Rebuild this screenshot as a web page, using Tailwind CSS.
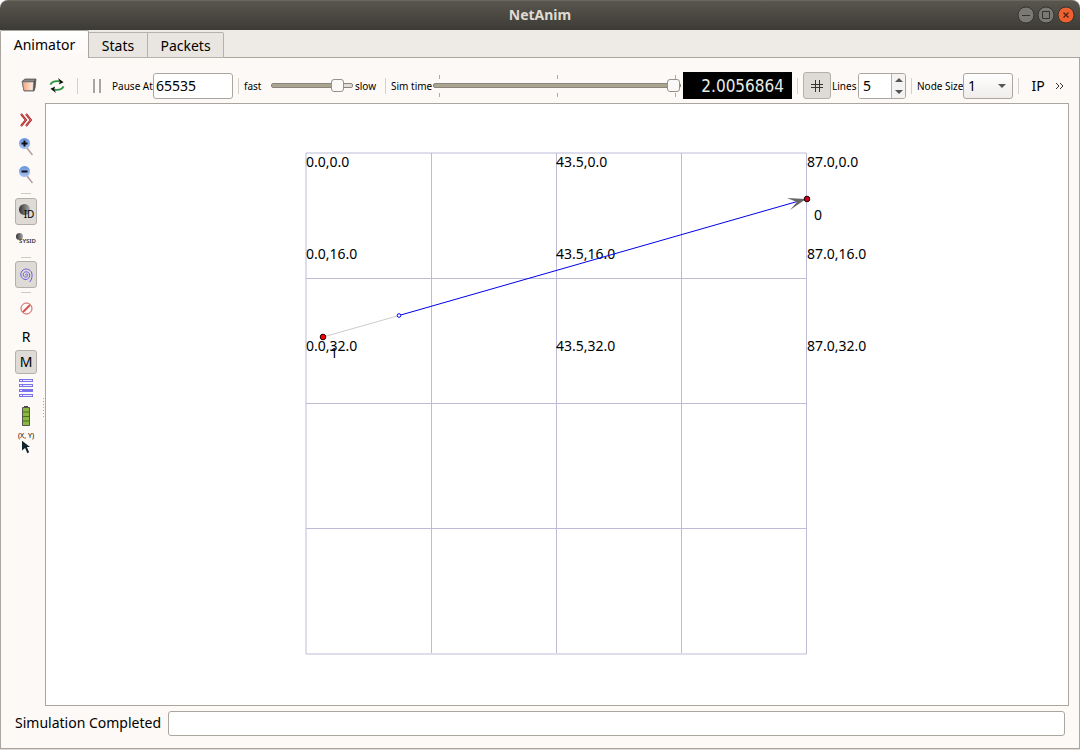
<!DOCTYPE html>
<html lang="en">
<head>
<meta charset="utf-8">
<meta name="viewport" content="width=device-width, initial-scale=1">
<title>NetAnim</title>
<script src="https://cdn.jsdelivr.net/npm/@tailwindcss/browser@4"></script>
</head>
<body class="flex h-screen flex-col overflow-hidden bg-white font-['Noto_Sans',sans-serif] text-[14px] leading-5 text-black">

<!-- Title bar -->
<header class="relative flex h-[30px] shrink-0 items-center justify-center rounded-t-lg border-t border-[#69675f] bg-linear-to-b from-[#59564e] to-[#3d3b36]">
  <h1 class="pb-px text-[14px] font-bold text-[#dfdbd2]">NetAnim</h1>
  <div class="absolute right-[5px] flex gap-[2px] pb-px">
    <button aria-label="Minimize" class="size-[18px]"><svg viewBox="0 0 18 18"><circle cx="9" cy="9" r="8" fill="#7b7a72" stroke="#34332f"/><path d="M5 9.500h8" stroke="#34332f"/></svg></button>
    <button aria-label="Maximize" class="size-[18px]"><svg viewBox="0 0 18 18"><circle cx="9" cy="9" r="8" fill="#7b7a72" stroke="#34332f"/><path d="M5.500 5.500h7v7h-7z" fill="none" stroke="#34332f"/></svg></button>
    <button aria-label="Close" class="size-[18px]"><svg viewBox="0 0 18 18"><circle cx="9" cy="9" r="8" fill="#ee6030" stroke="#34332f"/><path d="M6.500 6.500l5 5M11.500 6.500l-5 5" stroke="#4a2415" stroke-width="1.300"/></svg></button>
  </div>
</header>

<!-- Tabs -->
<nav role="tablist" class="flex h-7 shrink-0 items-end bg-[#eeebe7] shadow-[inset_0_-1px_0_#aaa69f]">
  <button role="tab" aria-selected="true" class="h-7 w-[89px] rounded-t-xs border border-b-0 border-[#aaa69f] bg-linear-to-b from-white to-[#fdf9f6]">Animator</button>
  <button role="tab" aria-selected="false" class="h-[26px] w-[59px] border border-l-0 border-[#b5b2ad] bg-[#e9e6e2] pt-px">Stats</button>
  <button role="tab" aria-selected="false" class="h-[26px] w-[76px] rounded-tr-xs border border-l-0 border-[#b5b2ad] bg-[#e9e6e2] pt-px">Packets</button>
</nav>

<main class="flex min-h-0 flex-1 flex-col border-x border-b border-[#aaa69f] bg-[#fdf9f6]">

  <!-- Playback toolbar -->
  <div role="toolbar" aria-label="Playback" class="flex h-[45px] shrink-0 items-center pt-[10px] pr-3 pl-5 text-[10px] whitespace-nowrap">
    <button aria-label="Open trace" class="mr-3 h-4 w-4 shrink-0"><svg class="h-4 w-4 pb-[2px]" viewBox="0 0 16 14" preserveAspectRatio="none"><defs><linearGradient id="box"><stop offset="0" stop-color="#f3a27b"/><stop offset="1" stop-color="#fff0e6"/></linearGradient></defs><path d="M1 3.500L4 1h11l-1 9-1 3H3z" fill="#555" stroke="#555" stroke-width=".8"/><path d="M1.500 4h11l-.5 8.500H3z" fill="url(#box)" stroke="#777" stroke-width=".6"/><path d="M4 1.500h10L12.500 3.500H2z" fill="#888"/></svg></button>
    <button aria-label="Reload" class="mr-3 h-4 w-4 shrink-0"><svg class="h-4 w-4 pb-px" viewBox="0 0 16 16" fill="none"><path d="M1 7Q3 2.500 11 3.500M15 9Q13 13.500 5 12.500" stroke="#2f9440" stroke-width="2"/><path d="M9 0l6 4.500L10 7l1-3zM7 16l-6-4.500L6 9l-1 3z" fill="#111"/></svg></button>
    <span class="h-4 w-px shrink-0 bg-[#d5d0cb]"></span>
    <button aria-label="Pause" class="mr-[11px] ml-[15px] h-4 w-2 shrink-0"><svg viewBox="0 0 8 16"><path d="M1 1v14M7 1v14" stroke="#8c8a87" stroke-width="1.500"/></svg></button>
    <label for="pause" class="w-[41px] shrink-0">Pause At</label>
    <input id="pause" value="65535" class="h-[26px] w-20 shrink-0 rounded-[3px] border border-[#aaa69f] bg-white px-[2px] text-[14px]">
    <span class="mx-[5px] h-4 w-px shrink-0 bg-[#d5d0cb]"></span>
    <label for="speed" class="w-[27px] shrink-0">fast</label>
    <input id="speed" type="range" min="0" max="100" value="88" class="h-4 w-[82px] shrink-0 appearance-none bg-transparent [&::-webkit-slider-runnable-track]:h-[5px] [&::-webkit-slider-runnable-track]:rounded-xs [&::-webkit-slider-runnable-track]:border [&::-webkit-slider-runnable-track]:border-[#88857b] [&::-webkit-slider-runnable-track]:bg-linear-to-r [&::-webkit-slider-runnable-track]:from-[#aaa490] [&::-webkit-slider-runnable-track]:from-80% [&::-webkit-slider-runnable-track]:to-[#dfdcd8] [&::-webkit-slider-runnable-track]:to-80% [&::-webkit-slider-thumb]:-mt-[5px] [&::-webkit-slider-thumb]:size-[13px] [&::-webkit-slider-thumb]:appearance-none [&::-webkit-slider-thumb]:rounded-[3px] [&::-webkit-slider-thumb]:border [&::-webkit-slider-thumb]:border-[#95928e] [&::-webkit-slider-thumb]:bg-[#faf9f8]">
    <span class="ml-[2px] w-[30px] shrink-0">slow</span>
    <span class="mr-[5px] h-4 w-px shrink-0 bg-[#d5d0cb]"></span>
    <label for="time" class="w-[42px] shrink-0 pt-px">Sim time</label>
    <div class="relative flex h-[22px] min-w-20 flex-1 items-center">
      <div class="absolute inset-y-0 right-[5px] left-[6px] flex justify-between">
        <span class="w-px border-y-4 border-[#aaa]"></span><span class="w-px border-y-4 border-[#aaa]"></span><span class="w-px border-y-4 border-[#aaa]"></span>
      </div>
      <input id="time" type="range" min="0" max="100" value="100" class="relative h-4 w-full appearance-none bg-transparent [&::-webkit-slider-runnable-track]:h-[5px] [&::-webkit-slider-runnable-track]:rounded-xs [&::-webkit-slider-runnable-track]:border [&::-webkit-slider-runnable-track]:border-[#88857b] [&::-webkit-slider-runnable-track]:bg-[#aaa490] [&::-webkit-slider-thumb]:-mt-[5px] [&::-webkit-slider-thumb]:size-[13px] [&::-webkit-slider-thumb]:appearance-none [&::-webkit-slider-thumb]:rounded-[3px] [&::-webkit-slider-thumb]:border [&::-webkit-slider-thumb]:border-[#95928e] [&::-webkit-slider-thumb]:bg-[#faf9f8]">
    </div>
    <output for="time" class="ml-[2px] flex h-[27px] w-[109px] shrink-0 items-center justify-end bg-black pr-2 font-['DejaVu_Sans_Condensed','DejaVu_Sans',sans-serif] text-[17px] text-[#e8ece8]">2.0056864</output>
    <span class="mx-[5px] h-4 w-px shrink-0 bg-[#d5d0cb]"></span>
    <button aria-label="Grid" aria-pressed="true" class="flex h-[27px] w-7 shrink-0 items-center justify-center rounded-[3px] border border-[#b3afab] bg-[#dedad6]"><svg class="size-3" viewBox="0 0 12 12"><path d="M4.500 0v12M8.500 0v12M0 4.500h12M0 7.500h12" stroke="#333" stroke-width="1"/></svg></button>
    <label for="lines" class="ml-px w-[26px] shrink-0 pt-px">Lines</label>
    <div class="flex h-[26px] w-12 shrink-0 overflow-hidden rounded-[3px] border border-[#aaa69f] bg-white">
      <input id="lines" value="5" class="w-8 bg-white pl-1 text-[14px]">
      <div class="flex flex-1 flex-col border-l border-[#b5b2ad] bg-[#f5f3f1]">
        <button aria-label="More lines" class="flex flex-1 items-center justify-center"><svg class="h-1 w-2" viewBox="0 0 8 4"><path d="M0 4l4-4 4 4z" fill="#555"/></svg></button>
        <button aria-label="Fewer lines" class="flex flex-1 items-center justify-center"><svg class="h-1 w-2" viewBox="0 0 8 4"><path d="M0 0l4 4 4-4z" fill="#555"/></svg></button>
      </div>
    </div>
    <span class="mx-[5px] h-4 w-px shrink-0 bg-[#d5d0cb]"></span>
    <label for="size" class="w-[46px] shrink-0 pt-px">Node Size</label>
    <div class="relative h-[26px] w-[50px] shrink-0">
      <select id="size" class="h-full w-full appearance-none rounded-[3px] border border-[#aaa69f] bg-linear-to-b from-white to-[#efecea] pl-1 text-[14px]"><option>1</option></select>
      <svg class="pointer-events-none absolute top-[11px] right-[7px] h-1 w-2" viewBox="0 0 8 4"><path d="M0 0l4 4 4-4z" fill="#555"/></svg>
    </div>
    <span class="mx-[5px] h-4 w-px shrink-0 bg-[#d5d0cb]"></span>
    <button class="ml-[6px] w-4 shrink-0 text-[14px]">IP</button>
    <button aria-label="More tools" class="ml-[9px] w-3 shrink-0"><svg class="h-2 w-[9px]" viewBox="0 0 9 8"><path d="M1 1l3 3-3 3M5 1l3 3-3 3" fill="none" stroke="#333"/></svg></button>
  </div>

  <div class="flex min-h-0 flex-1">
    <!-- Tool column -->
    <div role="toolbar" aria-label="Scene tools" class="flex w-11 shrink-0 flex-col items-center pt-1 pl-[6px]">
      <button aria-label="Expand" class="flex h-[26px] w-[22px] items-center justify-center"><svg class="h-[14px] w-3" viewBox="0 0 12 14"><path d="M1 1l5 6-5 6M6 1l5 6-5 6" fill="none" stroke="#a51414" stroke-width="2"/><path d="M1 1l5 6-5 6M6 1l5 6-5 6" fill="none" stroke="#f0a0a0" stroke-width=".6"/></svg></button>
      <button aria-label="Zoom in" class="flex h-7 w-[22px] items-center justify-center"><svg class="h-[18px] w-[14px]" viewBox="0 0 14 18"><defs><linearGradient id="lens" x2="0" y2="1"><stop stop-color="#6592df"/><stop offset="1" stop-color="#a8c4f0"/></linearGradient></defs><path d="M8 10l5.500 7" stroke="#b59a9e" stroke-width="1.500"/><circle cx="5.500" cy="5.500" r="5.500" fill="url(#lens)"/><path d="M2.500 5.500h6M5.500 2.500v6" stroke="#111" stroke-width="2"/></svg></button>
      <button aria-label="Zoom out" class="flex h-7 w-[22px] items-center justify-center"><svg class="h-[18px] w-[14px]" viewBox="0 0 14 18"><path d="M8 10l5.500 7" stroke="#b59a9e" stroke-width="1.500"/><circle cx="5.500" cy="5.500" r="5.500" fill="url(#lens)"/><path d="M2.500 5.500h6" stroke="#111" stroke-width="2"/></svg></button>
      <span class="mt-1 mb-1 h-px w-[10px] shrink-0 bg-[#cdc9c4]"></span>
      <button aria-pressed="true" class="relative flex h-[27px] w-[22px] items-center justify-center rounded-[3px] border border-[#b3afab] bg-[#dedad6]"><svg class="absolute top-[5px] left-[3px] size-[11px]" viewBox="0 0 11 11"><defs><linearGradient id="ball"><stop stop-color="#333"/><stop offset="1" stop-color="#aaa"/></linearGradient></defs><circle cx="5.500" cy="5.500" r="5.500" fill="url(#ball)"/></svg><span class="relative pt-[5px] pl-[6px] text-[10px] leading-3">ID</span></button>
      <button class="relative flex h-[31px] w-[22px] items-center justify-center"><svg class="absolute top-2 left-px size-[7px]" viewBox="0 0 11 11"><circle cx="5.500" cy="5.500" r="5.500" fill="url(#ball)"/></svg><span class="relative pt-px pl-[3px] text-[6px] leading-2 font-semibold text-[#333]">SYSID</span></button>
      <span class="mt-px mb-[3px] h-px w-[10px] shrink-0 bg-[#cdc9c4]"></span>
      <button aria-label="Wireless circles" aria-pressed="true" class="flex h-[27px] w-[22px] items-center justify-center rounded-[3px] border border-[#b3afab] bg-[#dedad6]"><svg class="h-4 w-[14px]" viewBox="0 0 14 16"><path d="M7 8.500C6 7.500 7.500 6 8.500 7.500C9.500 10 6 11 4.500 9C3 6 6.500 3.500 9.500 5.500C12.500 8.500 9.500 13 6 12.500C2 11.500 .5 7.500 3 4C6 .5 11.500 2 12.800 6C13.500 9 13 12.500 10.500 15" fill="none" stroke="#6d5edb"/></svg></button>
      <span class="mt-1 mb-[2px] h-px w-[10px] shrink-0 bg-[#cdc9c4]"></span>
      <button aria-label="Block packets" class="flex h-[27px] w-[22px] items-center justify-center"><svg class="size-[13px]" viewBox="0 0 13 13"><circle cx="6.500" cy="6.500" r="5.500" fill="none" stroke="#cf5554"/><path d="M3 10l7-7" stroke="#cf5554" stroke-width="2"/></svg></button>
      <button class="mt-1 h-[22px] w-[22px] text-[14px]">R</button>
      <button aria-pressed="true" class="mt-[2px] h-6 w-[22px] rounded-[3px] border border-[#b3afab] bg-[#dedad6] text-[14px]">M</button>
      <button aria-label="Packet list" class="flex h-7 w-[22px] items-center justify-center"><svg class="h-[18px] w-[14px]" viewBox="0 0 14 18"><path d="M0 1.500h14M0 6.500h14M0 11.500h14M0 16.500h14" stroke="#7b72ec" stroke-width="3"/><path d="M1 1.500h2M4 1.500h9M1 6.500h2M4 6.500h9M1 11.500h2M1 16.500h2M4 16.500h9" stroke="#eeeafd"/></svg></button>
      <button aria-label="Battery" class="flex h-7 w-[22px] items-center justify-center"><svg class="h-5 w-2" viewBox="0 0 8 20"><path d="M2 0h4v2H2z" fill="#444"/><path d="M.5 1.500h7v18h-7z" fill="#8cb840" stroke="#555"/><path d="M1 6h6M1 10.500h6M1 15h6" stroke="#477021"/></svg></button>
      <button aria-label="Position" class="mt-[2px] flex h-6 w-[22px] flex-col items-center"><span class="text-[7px] leading-2 whitespace-nowrap">(X, Y)</span><svg class="h-[14px] w-2" viewBox="0 0 9 14"><path d="M0 0l9 7H5.500L8 13l-2 1L3.500 8 0 11z" fill="#10252b"/></svg></button>
    </div>

    <!-- Scene canvas -->
    <section aria-label="Network scene" class="relative mr-[10px] flex min-w-0 flex-1 items-center justify-center border border-[#aaa69f] bg-white pb-px">
      <svg class="absolute top-[calc(50%-7px)] -left-1 h-5 w-[3px]" viewBox="0 0 3 20"><path d="M1.500 0v20" stroke="#aaa" stroke-dasharray="1 2"/></svg>
      <svg class="h-[502px] w-[502px] shrink-0 overflow-visible text-[14px]" viewBox="306 153 502 502">
        <path d="M306 153h500.500v501h-500.500zM431.500 153v500M556.500 153v500M681.500 153v500M306 278.500h500M306 403.500h500M306 528.500h500" fill="none" stroke="#bdbbd8"/>
        <g fill="#000">
          <text x="306" y="167">0.0,0.0</text><text x="556" y="167">43.5,0.0</text><text x="807" y="167">87.0,0.0</text>
          <text x="306" y="259">0.0,16.0</text><text x="556" y="259">43.5,16.0</text><text x="807" y="259">87.0,16.0</text>
          <text x="306" y="351">0.0,32.0</text><text x="556" y="351">43.5,32.0</text><text x="807" y="351">87.0,32.0</text>
          <text x="814" y="220">0</text><text x="330" y="358">1</text>
        </g>
        <path d="M323 337L399 315.500" stroke="#ccc"/>
        <path d="M399 315.500L806 199" stroke="#00e"/>
        <path d="M787 198L806 199 790 210 797 202z" fill="#666"/>
        <circle cx="399" cy="315.500" r="1.800" fill="#fff" stroke="#00e"/>
        <circle cx="323" cy="337" r="2.800" fill="#f00" stroke="#200"/>
        <circle cx="807" cy="199" r="2.800" fill="#c00020" stroke="#200"/>
      </svg>
    </section>
  </div>

  <!-- Status -->
  <footer class="flex h-[42px] shrink-0 items-center gap-[2px] pr-[14px] pb-2 pl-[14px]">
    <label for="status" class="w-[151px] shrink-0 whitespace-nowrap">Simulation Completed</label>
    <input id="status" class="h-[25px] min-w-0 flex-1 rounded-[3px] border border-[#aaa69f] bg-white px-1">
  </footer>
</main>
<div class="h-px shrink-0 bg-[#dedbd6]"></div>
</body>
</html>
